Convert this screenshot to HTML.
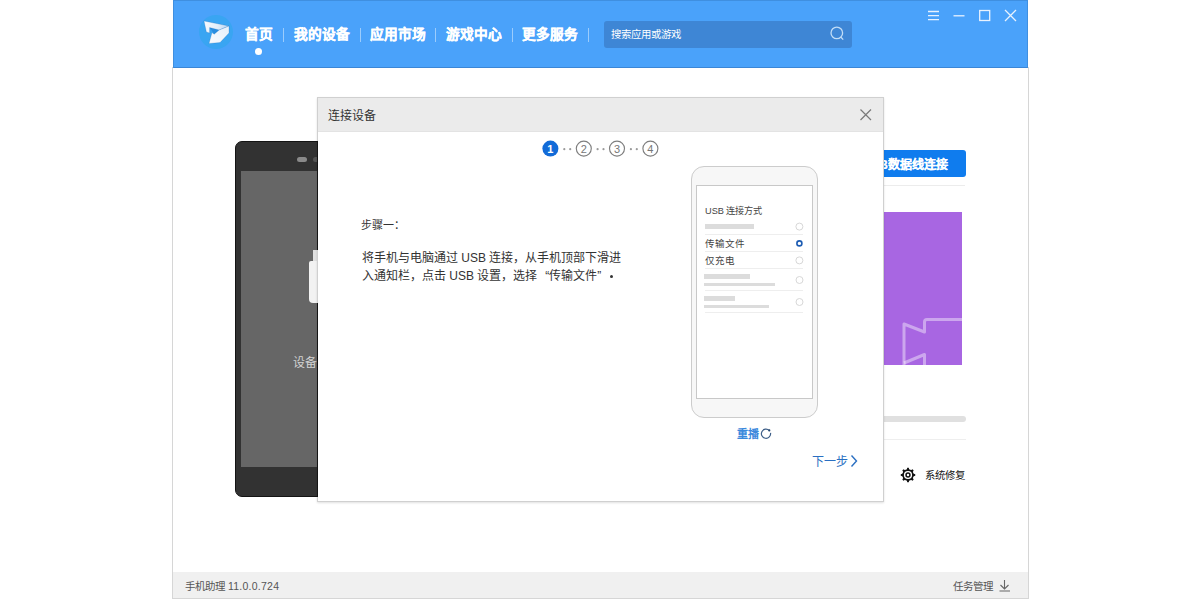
<!DOCTYPE html>
<html lang="zh-CN"><head><meta charset="utf-8">
<style>
*{box-sizing:border-box;}
html,body{margin:0;padding:0;width:1200px;height:600px;overflow:hidden;background:#fff;font-family:"Liberation Sans",sans-serif;}
.a{position:absolute;}
.t{position:absolute;white-space:nowrap;line-height:1;}
</style></head><body>
<!-- window -->
<div class="a" style="left:172px;top:67px;width:857px;height:532px;border:1px solid #d6d6d6;background:#fff;"></div>
<!-- header -->
<div class="a" style="left:173px;top:0;width:855px;height:68px;background:#4aa2fa;border:1px solid #3f8fe0;border-bottom-color:#3b86d6;"></div>
<!-- logo -->
<div class="a" style="left:199px;top:15px;width:34px;height:34px;border-radius:50%;background:#39a5f2;"></div>

<svg class="a" style="left:0;top:0" width="240" height="60" viewBox="0 0 240 60">
  <defs>
   <linearGradient id="lg1" gradientUnits="userSpaceOnUse" x1="204" y1="22" x2="229" y2="28"><stop offset="0" stop-color="#f6fafe"/><stop offset="0.55" stop-color="#e2eefa"/><stop offset="1" stop-color="#b3d3f2"/></linearGradient>
   <linearGradient id="lg2" gradientUnits="userSpaceOnUse" x1="228" y1="27" x2="210" y2="43"><stop offset="0" stop-color="#e6f0fa"/><stop offset="1" stop-color="#f8fbfe"/></linearGradient>
  </defs>
  <path d="M209.6 27.6 L219.2 30 L214.2 34.2 Z" fill="#2a8ee0"/>
  <path d="M204 21 L229 26 L219.2 30 L209.6 27.6 L209.6 33 L206.4 32 Z" fill="url(#lg1)" stroke="rgba(20,90,170,.35)" stroke-width=".6"/>
  <path d="M229 26 L229 33 L220 42.6 L209 43.4 L212 32.6 L214.2 34.2 L219.2 30 Z" fill="url(#lg2)" stroke="rgba(20,90,170,.35)" stroke-width=".6"/>
</svg>
<!-- nav -->
<div class="t" style="left:245px;top:28px;font-size:13.7px;font-weight:bold;color:#fff;-webkit-text-stroke:.25px #fff">首页</div>
<div class="a" style="left:255px;top:48px;width:7px;height:7px;border-radius:50%;background:#fff"></div>
<div class="a" style="left:283px;top:28px;width:1px;height:14px;background:rgba(255,255,255,.45)"></div>
<div class="t" style="left:294px;top:28px;font-size:13.7px;font-weight:bold;color:#fff;-webkit-text-stroke:.25px #fff">我的设备</div>
<div class="a" style="left:360px;top:28px;width:1px;height:14px;background:rgba(255,255,255,.45)"></div>
<div class="t" style="left:370px;top:28px;font-size:13.7px;font-weight:bold;color:#fff;-webkit-text-stroke:.25px #fff">应用市场</div>
<div class="a" style="left:435px;top:28px;width:1px;height:14px;background:rgba(255,255,255,.45)"></div>
<div class="t" style="left:446px;top:28px;font-size:13.7px;font-weight:bold;color:#fff;-webkit-text-stroke:.25px #fff">游戏中心</div>
<div class="a" style="left:512px;top:28px;width:1px;height:14px;background:rgba(255,255,255,.45)"></div>
<div class="t" style="left:522px;top:28px;font-size:13.7px;font-weight:bold;color:#fff;-webkit-text-stroke:.25px #fff">更多服务</div>
<div class="a" style="left:588px;top:28px;width:1px;height:14px;background:rgba(255,255,255,.45)"></div>
<!-- search -->
<div class="a" style="left:604px;top:21px;width:248px;height:27px;border-radius:3px;background:#3e86d5;"></div>
<div class="t" style="left:611px;top:30px;font-size:10.4px;font-weight:500;color:#fff">搜索应用或游戏</div>
<svg class="a" style="left:826px;top:23px" width="22" height="22" viewBox="0 0 22 22">
  <circle cx="10.8" cy="9.9" r="5.8" fill="none" stroke="#c2ddf7" stroke-width="1.3"/>
  <path d="M14.8 14 L17.2 16.6" stroke="#c2ddf7" stroke-width="1.3"/>
</svg>
<!-- window controls -->
<svg class="a" style="left:920px;top:0" width="110" height="35" viewBox="0 0 110 35">
  <g stroke="#e8f2fe" stroke-width="1.3" fill="none">
    <path d="M8 11.5 H19 M8 15.6 H19 M8 19.7 H19"/>
    <path d="M33.5 15.8 H44.5"/>
    <rect x="59.7" y="10.5" width="10" height="10"/>
    <path d="M85 10 L96 21 M96 10 L85 21"/>
  </g>
</svg>

<!-- background content: phone -->
<div class="a" style="left:235px;top:141px;width:120px;height:356px;border-radius:7px;background:#323232;border:1px solid #141414;"></div>
<div class="a" style="left:241px;top:171px;width:100px;height:296px;background:#666;"></div>
<div class="a" style="left:297px;top:157px;width:10px;height:5px;border-radius:3px;background:#8a8a8a;"></div>
<div class="a" style="left:313px;top:157px;width:6px;height:5px;border-radius:3px;background:#555;"></div>
<div class="a" style="left:312.5px;top:250px;width:10px;height:12px;background:#e0e0e0;"></div>
<div class="a" style="left:308.5px;top:261px;width:14px;height:42px;border-radius:2px 0 0 4px;background:#f2f2f2;"></div>
<div class="t" style="left:293px;top:357px;font-size:12px;color:#d2d2d2">设备</div>

<!-- right bg content -->
<div class="a" style="left:860px;top:150px;width:106px;height:27px;border-radius:3px;background:#0f7cee;"></div>
<div class="t" style="left:862.5px;top:159px;font-size:12px;font-weight:bold;color:#fff;-webkit-text-stroke:.2px #fff">USB数据线连接</div>
<div class="a" style="left:860px;top:185px;width:105px;height:1px;background:#ececec;"></div>
<div class="a" style="left:860px;top:212px;width:102px;height:153px;background:#a866e2;overflow:hidden">
 <svg width="102" height="153" viewBox="860 212 102 153" style="position:absolute;left:0;top:0">
  <path d="M963 319.5 H927 Q924.5 319.5 924.5 322 V332 L904 324 V366" fill="none" stroke="rgba(255,255,255,.42)" stroke-width="3" stroke-linejoin="round"/>
  <path d="M904 363 L924.5 354.5 V366" fill="none" stroke="rgba(255,255,255,.42)" stroke-width="3" stroke-linejoin="round"/>
 </svg>
</div>
<div class="a" style="left:860px;top:416px;width:106px;height:6px;border-radius:3px;background:#e0e0e0;"></div>
<div class="a" style="left:860px;top:439px;width:106px;height:1px;background:#eeeeee;"></div>
<svg class="a" style="left:897.6px;top:464.6px" width="20" height="20" viewBox="0 0 20 20">
  <path fill="#111" d="M7.86 4.83 L8.87 4.21 L9.24 2.74 L10.76 2.74 L11.13 4.21 L12.14 4.83 L13.30 5.11 L14.59 4.33 L15.67 5.41 L14.89 6.70 L15.17 7.86 L15.79 8.87 L17.26 9.24 L17.26 10.76 L15.79 11.13 L15.17 12.14 L14.89 13.30 L15.67 14.59 L14.59 15.67 L13.30 14.89 L12.14 15.17 L11.13 15.79 L10.76 17.26 L9.24 17.26 L8.87 15.79 L7.86 15.17 L6.70 14.89 L5.41 15.67 L4.33 14.59 L5.11 13.30 L4.83 12.14 L4.21 11.13 L2.74 10.76 L2.74 9.24 L4.21 8.87 L4.83 7.86 L5.11 6.70 L4.33 5.41 L5.41 4.33 L6.70 5.11 Z"/>
  <circle cx="10" cy="10" r="4.1" fill="#fff"/>
  <circle cx="10" cy="10" r="2.7" fill="#111"/>
  <circle cx="10" cy="10" r="1.2" fill="#fff"/>
</svg>
<div class="t" style="left:925px;top:471px;font-size:10.4px;color:#111;font-weight:500">系统修复</div>

<!-- footer -->
<div class="a" style="left:173px;top:572px;width:855px;height:26px;background:#f0f0f0;"></div>
<div class="t" style="left:185px;top:581px;font-size:10.5px;color:#555">手机助理 <span style="letter-spacing:.25px">11.0.0.724</span></div>
<div class="t" style="left:953px;top:581px;font-size:10.5px;color:#555">任务管理</div>
<svg class="a" style="left:998px;top:579px" width="14" height="14" viewBox="0 0 14 14">
  <path d="M6.5 1 V10 M2.5 6 L6.5 10 L10.5 6 M1.5 12 H12" fill="none" stroke="#666" stroke-width="1.1"/>
</svg>

<!-- modal -->
<div class="a" style="left:317px;top:141px;width:1px;height:109px;background:#151515;z-index:5"></div>
<div class="a" style="left:317px;top:303px;width:1px;height:194px;background:#151515;z-index:5"></div>
<div class="a" style="left:317px;top:97px;width:567px;height:405px;border:1px solid #d0d0d0;background:#fff;box-shadow:0 1px 2px rgba(0,0,0,.12);"></div>
<div class="a" style="left:318px;top:98px;width:565px;height:34px;background:#ebebeb;border-bottom:1px solid #e3e3e3;"></div>
<div class="t" style="left:328px;top:110px;font-size:12px;color:#333">连接设备</div>
<svg class="a" style="left:856px;top:105px" width="20" height="20" viewBox="0 0 20 20">
  <path d="M4.5 4.5 L15 15 M15 4.5 L4.5 15" stroke="#7a7a7a" stroke-width="1.2"/>
</svg>

<!-- steps -->
<svg class="a" style="left:530px;top:135px" width="140" height="28" viewBox="530 135 140 28">
  <circle cx="550.4" cy="148.6" r="8" fill="#126bd8"/>
  <text x="550.4" y="153" font-size="11" font-weight="bold" fill="#fff" text-anchor="middle" font-family="Liberation Sans">1</text>
  <g fill="none" stroke="#7e7e7e" stroke-width="1.15">
   <circle cx="583.8" cy="148.6" r="7.5"/>
   <circle cx="617" cy="148.6" r="7.5"/>
   <circle cx="650.4" cy="148.6" r="7.5"/>
  </g>
  <g fill="#777" font-size="11" text-anchor="middle" font-family="Liberation Sans">
   <text x="583.8" y="152.5">2</text>
   <text x="617" y="152.5">3</text>
   <text x="650.4" y="152.5">4</text>
  </g>
  <g fill="#9a9a9a">
   <circle cx="564.3" cy="149.2" r="1.1"/><circle cx="570.2" cy="149.2" r="1.1"/>
   <circle cx="597.6" cy="149.2" r="1.1"/><circle cx="603.5" cy="149.2" r="1.1"/>
   <circle cx="630.9" cy="149.2" r="1.1"/><circle cx="636.8" cy="149.2" r="1.1"/>
  </g>
</svg>

<!-- step text -->
<div class="t" style="left:361px;top:220px;font-size:11px;color:#333">步骤一：</div>
<div class="t" style="left:362px;top:250px;font-size:12px;color:#333;line-height:17.5px">将手机与电脑通过 USB 连接，从手机顶部下滑进<br>入通知栏，点击 USB 设置，选择<span style="display:inline-block;width:12px;text-align:right">“</span>传输文件<span style="display:inline-block;width:12px;text-align:left">”</span><span style="display:inline-block;width:12px;height:12px;position:relative;vertical-align:baseline"><i style="position:absolute;left:0.5px;top:7px;width:3.4px;height:3.4px;border-radius:50%;background:#333"></i></span></div>

<!-- phone illustration -->
<div class="a" style="left:691px;top:166px;width:127px;height:252px;border:1px solid #cccccc;border-radius:13px;background:#f7f7f7;"></div>
<div class="a" style="left:696px;top:185px;width:117px;height:214px;border:1.5px solid #c8c8c8;background:#fff;"></div>
<div class="t" style="left:705px;top:206.5px;font-size:9.2px;color:#444">USB 连接方式</div>
<div class="a" style="left:705px;top:224px;width:49px;height:5px;background:#dcdcdc"></div>
<div class="a" style="left:705px;top:234px;width:98px;height:1px;background:#eee"></div>
<div class="t" style="left:705px;top:239px;font-size:9.5px;color:#444">传输文件</div>
<div class="a" style="left:705px;top:251px;width:98px;height:1px;background:#eee"></div>
<div class="t" style="left:705px;top:256px;font-size:9.5px;color:#444">仅充电</div>
<div class="a" style="left:705px;top:268px;width:98px;height:1px;background:#eee"></div>
<div class="a" style="left:704px;top:274px;width:46px;height:5px;background:#dcdcdc"></div>
<div class="a" style="left:704px;top:283px;width:71px;height:3px;background:#dcdcdc"></div>
<div class="a" style="left:705px;top:290px;width:98px;height:1px;background:#eee"></div>
<div class="a" style="left:704px;top:296px;width:31px;height:5px;background:#dcdcdc"></div>
<div class="a" style="left:704px;top:305px;width:65px;height:3px;background:#dcdcdc"></div>
<div class="a" style="left:705px;top:312px;width:98px;height:1px;background:#eee"></div>
<svg class="a" style="left:790px;top:218px" width="20" height="95" viewBox="790 218 20 95">
  <g fill="none" stroke="#d8d8d8" stroke-width="1">
   <circle cx="799.4" cy="226.6" r="3.5"/>
   <circle cx="799.4" cy="260.4" r="3.5"/>
   <circle cx="799.5" cy="280" r="3.5"/>
   <circle cx="799.5" cy="302" r="3.5"/>
  </g>
  <circle cx="799.4" cy="243.4" r="2.5" fill="none" stroke="#1d5cb3" stroke-width="1.6"/>
</svg>
<div class="t" style="left:737px;top:429px;font-size:11px;font-weight:bold;color:#3a88dc">重播</div>
<svg class="a" style="left:759px;top:427px" width="14" height="14" viewBox="0 0 14 14">
  <path d="M11.53 5.9 A4.6 4.6 0 1 1 10.25 3.45" fill="none" stroke="#3e5f88" stroke-width="1.2"/>
  <circle cx="10.3" cy="3.4" r="1.1" fill="#22446e"/>
</svg>
<div class="t" style="left:812px;top:455.5px;font-size:12px;color:#2a6fc2">下一步</div>
<svg class="a" style="left:849px;top:453px" width="10" height="16" viewBox="0 0 10 16">
  <path d="M2.5 2.5 L7.5 8 L2.5 13.5" fill="none" stroke="#2a6fc2" stroke-width="1.4"/>
</svg>
</body></html>
